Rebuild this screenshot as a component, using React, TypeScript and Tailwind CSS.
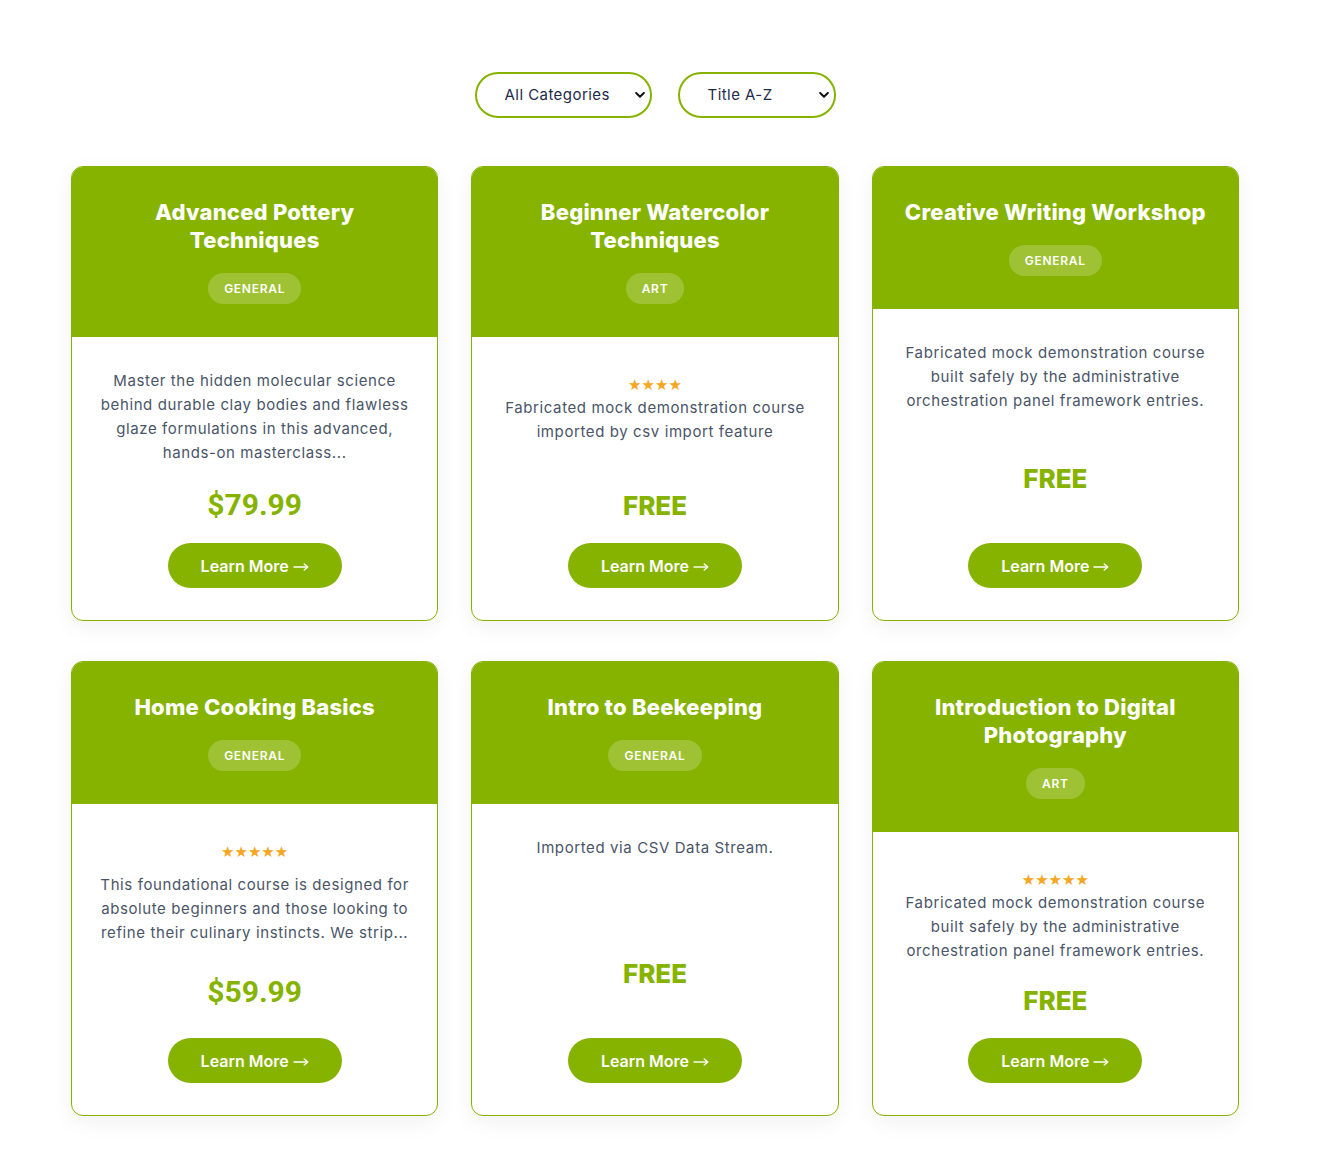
import React from "react";

type Course = {
  title: string;
  category: string;
  stars?: number;
  desc: string;
  price: string;
  descExtra?: boolean;
};

const courses: Course[] = [
  {
    title: "Advanced Pottery Techniques",
    category: "GENERAL",
    desc: "Master the hidden molecular science behind durable clay bodies and flawless glaze formulations in this advanced, hands-on masterclass...",
    price: "$79.99",
  },
  {
    title: "Beginner Watercolor Techniques",
    category: "ART",
    stars: 4,
    desc: "Fabricated mock demonstration course imported by csv import feature",
    price: "FREE",
  },
  {
    title: "Creative Writing Workshop",
    category: "GENERAL",
    desc: "Fabricated mock demonstration course built safely by the administrative orchestration panel framework entries.",
    price: "FREE",
  },
  {
    title: "Home Cooking Basics",
    category: "GENERAL",
    stars: 5,
    descExtra: true,
    desc: "This foundational course is designed for absolute beginners and those looking to refine their culinary instincts. We strip...",
    price: "$59.99",
  },
  {
    title: "Intro to Beekeeping",
    category: "GENERAL",
    desc: "Imported via CSV Data Stream.",
    price: "FREE",
  },
  {
    title: "Introduction to Digital Photography",
    category: "ART",
    stars: 5,
    desc: "Fabricated mock demonstration course built safely by the administrative orchestration panel framework entries.",
    price: "FREE",
  },
];

const font = { fontFamily: '"Inter", "Noto Sans", sans-serif' };

function Chevron() {
  return (
    <svg width="10" height="7" viewBox="0 0 10 7" className="pointer-events-none absolute right-[7px] top-1/2 -translate-y-1/2">
      <path d="M1.2 1.5 L5 5.2 L8.8 1.5" fill="none" stroke="#111" strokeWidth="2" strokeLinecap="round" strokeLinejoin="round" />
    </svg>
  );
}

function Select({ label, width }: { label: string; width: string }) {
  return (
    <div className={`relative ${width}`}>
      <select
        className="h-[46px] w-full appearance-none rounded-full border-2 border-[#86b300] bg-white pl-[28px] pr-6 text-[15px] tracking-[0.03em] text-[#1f2b4a] outline-none"
        style={font}
        defaultValue={label}
      >
        <option>{label}</option>
      </select>
      <Chevron />
    </div>
  );
}

function Arrow() {
  return (
    <svg width="16" height="10" viewBox="0 0 16 10" className="ml-[4px] mt-[2px]">
      <path d="M0.5 5 H14.5" stroke="#fff" strokeWidth="1.4" fill="none" />
      <path d="M11.2 2 L14.8 5 L11.2 8" stroke="#fff" strokeWidth="1.4" fill="none" strokeLinecap="round" strokeLinejoin="round" />
    </svg>
  );
}

function Card({ c }: { c: Course }) {
  const isFree = c.price === "FREE";
  return (
    <div className="flex flex-col overflow-hidden rounded-[12px] border border-[#86b300] bg-white shadow-[0_6px_22px_rgba(0,0,0,0.06)]">
      <div className="bg-[#86b300] px-6 pb-[33px] pt-[31px] text-center">
        <h3 className="text-[22px] font-extrabold leading-[28px] tracking-[0.01em] text-white" style={font}>
          {c.title}
        </h3>
        <span
          className="mt-[19px] inline-block h-[31px] rounded-full bg-white/20 px-4 text-[12px] font-semibold leading-[31px] tracking-[0.06em] text-white"
          style={font}
        >
          {c.category}
        </span>
      </div>
      <div className="flex flex-1 flex-col justify-between px-6 pb-[32px] pt-[32px] text-center">
        <div>
          {c.stars ? (
            <div
              className="mb-[4px] mt-[9px] text-[15px] leading-[14px] text-[#f5a623]"
              style={{ fontFamily: '"DejaVu Sans", sans-serif' }}
            >
              {"★".repeat(c.stars)}
            </div>
          ) : null}
          <p
            className={`min-h-[72px] text-[15px] leading-[24px] tracking-[0.04em] text-[#4a5568] ${c.descExtra ? "pt-[10px]" : ""}`}
            style={font}
          >
            {c.desc}
          </p>
        </div>
        <div
          className={`mb-[20px] mt-[21px] leading-[34px] text-[#86b300] ${isFree ? "text-[26px] font-extrabold" : "text-[30px] font-bold"}`}
          style={isFree ? font : { fontFamily: "Roboto, Arial, sans-serif" }}
        >
          {c.price}
        </div>
        <div className="flex justify-center">
          <button
            className="flex h-[45px] w-[174px] items-center justify-center rounded-full bg-[#86b300] text-[16px] font-semibold text-white"
            style={font}
          >
            Learn More
            <Arrow />
          </button>
        </div>
      </div>
    </div>
  );
}

export default function App() {
  return (
    <div className="min-h-[1154px] bg-white pt-[72px]">
      <div className="ml-[71px] w-[1168px]">
        <div className="flex justify-center gap-[26px]">
          <Select label="All Categories" width="w-[177px]" />
          <Select label="Title A-Z" width="w-[158px]" />
        </div>
        <div className="mt-[48px] grid grid-cols-3 gap-x-[33px] gap-y-[40px]">
          {courses.map((c) => (
            <Card key={c.title} c={c} />
          ))}
        </div>
      </div>
    </div>
  );
}
